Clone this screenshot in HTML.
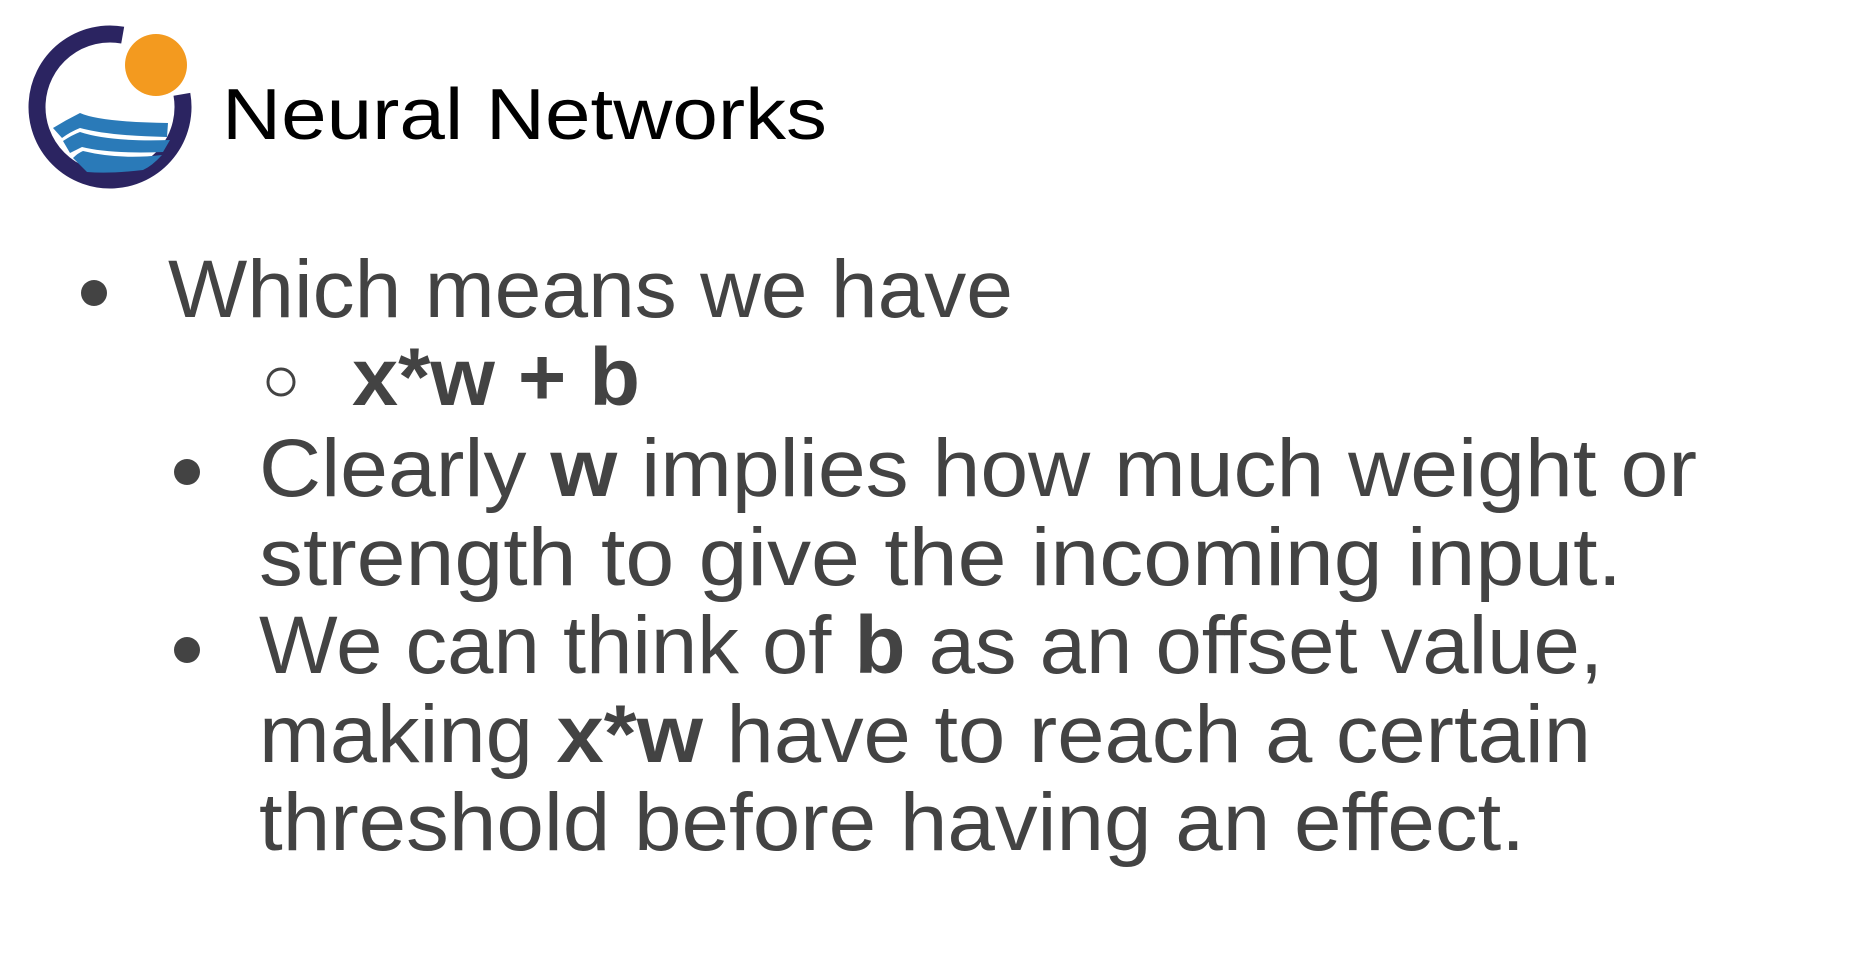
<!DOCTYPE html>
<html><head><meta charset="utf-8"><style>
html,body{margin:0;padding:0;background:#fff;}
svg{display:block}
</style></head><body>
<svg width="1852" height="956" viewBox="0 0 1852 956" xmlns="http://www.w3.org/2000/svg">
<rect width="1852" height="956" fill="#fff"/>
<path d="M181.9 94.3 A73 73 0 1 1 122.7 35.1" fill="none" stroke="#2b2461" stroke-width="17"/>
<circle cx="156" cy="65" r="31" fill="#f39a1f"/>
<path d="M53 128 Q66 120 80 113 Q100 122 168 123 L167 137 Q110 136 80 128 Q70 132 62 138 Z" fill="#2a7ab8"/>
<path d="M63 141 Q72 135 80 132 Q110 142 170 140 L163 152 Q110 154 82 147 Q76 150 70 153 Z" fill="#2a7ab8"/>
<path d="M73 158 Q78 153 83 151 Q120 160 162 155 Q152 166 143 170 Q110 174 87 172 Z" fill="#2a7ab8"/>
<g font-family="Liberation Sans, sans-serif">
<text x="222" y="139" font-size="72" fill="#000" textLength="605" lengthAdjust="spacingAndGlyphs">Neural Networks</text>
<g fill="#434343" font-size="82">
<circle cx="94" cy="293" r="13" fill="#434343"/>
<text x="168" y="317" textLength="845" lengthAdjust="spacingAndGlyphs">Which means we have</text>
<circle cx="281" cy="382" r="13" fill="none" stroke="#434343" stroke-width="3"/>
<text x="352" y="405" font-weight="bold" textLength="288" lengthAdjust="spacingAndGlyphs">x*w + b</text>
<circle cx="187" cy="472" r="13" fill="#434343"/>
<text x="259" y="496" textLength="1438" lengthAdjust="spacingAndGlyphs">Clearly <tspan font-weight="bold">w</tspan> implies how much weight or</text>
<text x="259" y="585" textLength="1363" lengthAdjust="spacingAndGlyphs">strength to give the incoming input.</text>
<circle cx="187" cy="650" r="13" fill="#434343"/>
<text x="259" y="673" textLength="1344" lengthAdjust="spacingAndGlyphs">We can think of <tspan font-weight="bold">b</tspan> as an offset value,</text>
<text x="259" y="762" textLength="1332" lengthAdjust="spacingAndGlyphs">making <tspan font-weight="bold">x*w</tspan> have to reach a certain</text>
<text x="259" y="850" textLength="1266" lengthAdjust="spacingAndGlyphs">threshold before having an effect.</text>
</g></g>
</svg>
</body></html>
